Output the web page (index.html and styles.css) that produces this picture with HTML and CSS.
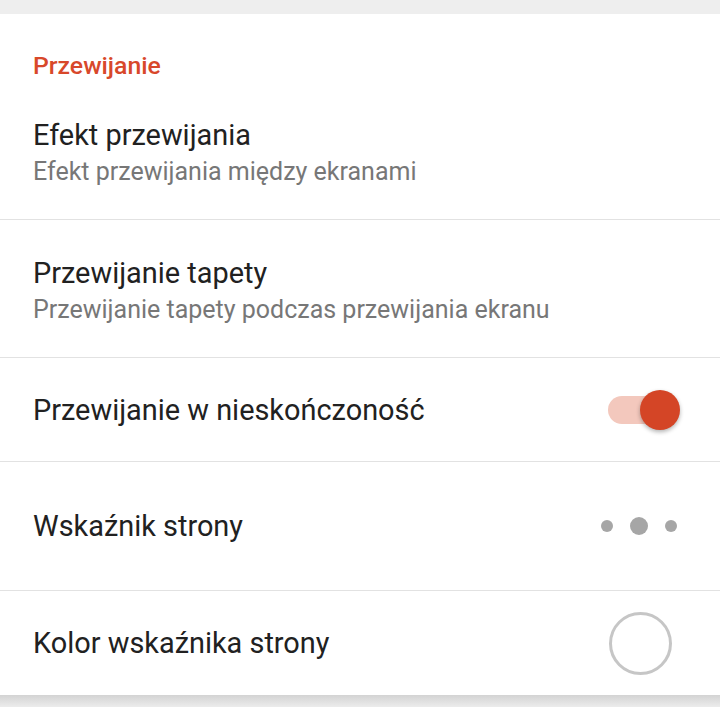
FILE: index.html
```html
<!DOCTYPE html>
<html lang="pl">
<head>
<meta charset="utf-8">
<link rel="stylesheet" href="styles.css">
</head>
<body>
<div class="page">
  <div class="card">
    <div class="section-title">Przewijanie</div>
    <div class="row row-two first">
      <div class="title">Efekt przewijania</div>
      <div class="summary">Efekt przewijania między ekranami</div>
    </div>
    <div class="row row-two second">
      <div class="title">Przewijanie tapety</div>
      <div class="summary">Przewijanie tapety podczas przewijania ekranu</div>
    </div>
    <div class="row row-one r3">
      <div class="title">Przewijanie w nieskończoność</div>
      <div class="toggle"><span class="track"></span><span class="thumb"></span></div>
    </div>
    <div class="row row-one r4">
      <div class="title">Wskaźnik strony</div>
      <div class="dots"><span class="dot"></span><span class="dot big"></span><span class="dot"></span></div>
    </div>
    <div class="row row-one r5 last">
      <div class="title">Kolor wskaźnika strony</div>
      <div class="ring"></div>
    </div>
  </div>
  <div class="shade"></div>
</div>
</body>
</html>
```

FILE: styles.css
```css
html, body {
  margin: 0;
  padding: 0;
  background: #eeeeee;
  font-family: Roboto, "Noto Sans", sans-serif;
}
.page {
  padding-top: 14px;
  height: 707px;
  box-sizing: border-box;
  overflow: hidden;
}
.card {
  background: #ffffff;
  height: 681px;
  display: flex;
  flex-direction: column;
}
.shade {
  height: 12px;
  background: linear-gradient(#d3d3d3, #ececec);
}
.section-title {
  padding: 37px 0 0 33px;
  height: 30px;
  line-height: 30px;
  font-size: 24.8px;
  font-weight: 500;
  color: #d8482a;
}
.row {
  display: flex;
  border-bottom: 1px solid #e2e2e2;
  padding: 0 40px 0 33px;
  box-sizing: border-box;
}
.row.last { border-bottom: none; }
.row-two {
  flex-direction: column;
}
.row-two.first { height: 139px; padding-top: 37px; }
.row-two.second { height: 138px; padding-top: 36px; }
.row-one {
  align-items: center;
  justify-content: space-between;
}
.r3 { height: 104px; }
.r4 { height: 129px; }
.r5 { height: 104px; }
.title {
  font-size: 28.9px;
  line-height: 34px;
  color: #212121;
}
.summary {
  margin-top: 5px;
  font-size: 25px;
  line-height: 30px;
  color: #777777;
}
.toggle {
  position: relative;
  width: 72px;
  height: 40px;
}
.track {
  position: absolute;
  left: 0;
  top: 6px;
  width: 62px;
  height: 28px;
  border-radius: 14px;
  background: #f3c8bd;
}
.thumb {
  position: absolute;
  right: 0;
  top: 0;
  width: 40px;
  height: 40px;
  border-radius: 50%;
  background: #d44526;
  box-shadow: 0 2px 4px rgba(0,0,0,0.3);
}
.dots {
  display: flex;
  align-items: center;
  gap: 17px;
  margin-right: 3px;
}
.dot {
  width: 12px;
  height: 12px;
  border-radius: 50%;
  background: #a6a6a6;
}
.dot.big {
  width: 18px;
  height: 18px;
}
.ring {
  width: 57px;
  height: 57px;
  border: 3px solid #c6c6c6;
  border-radius: 50%;
  margin-right: 8px;
}
```
